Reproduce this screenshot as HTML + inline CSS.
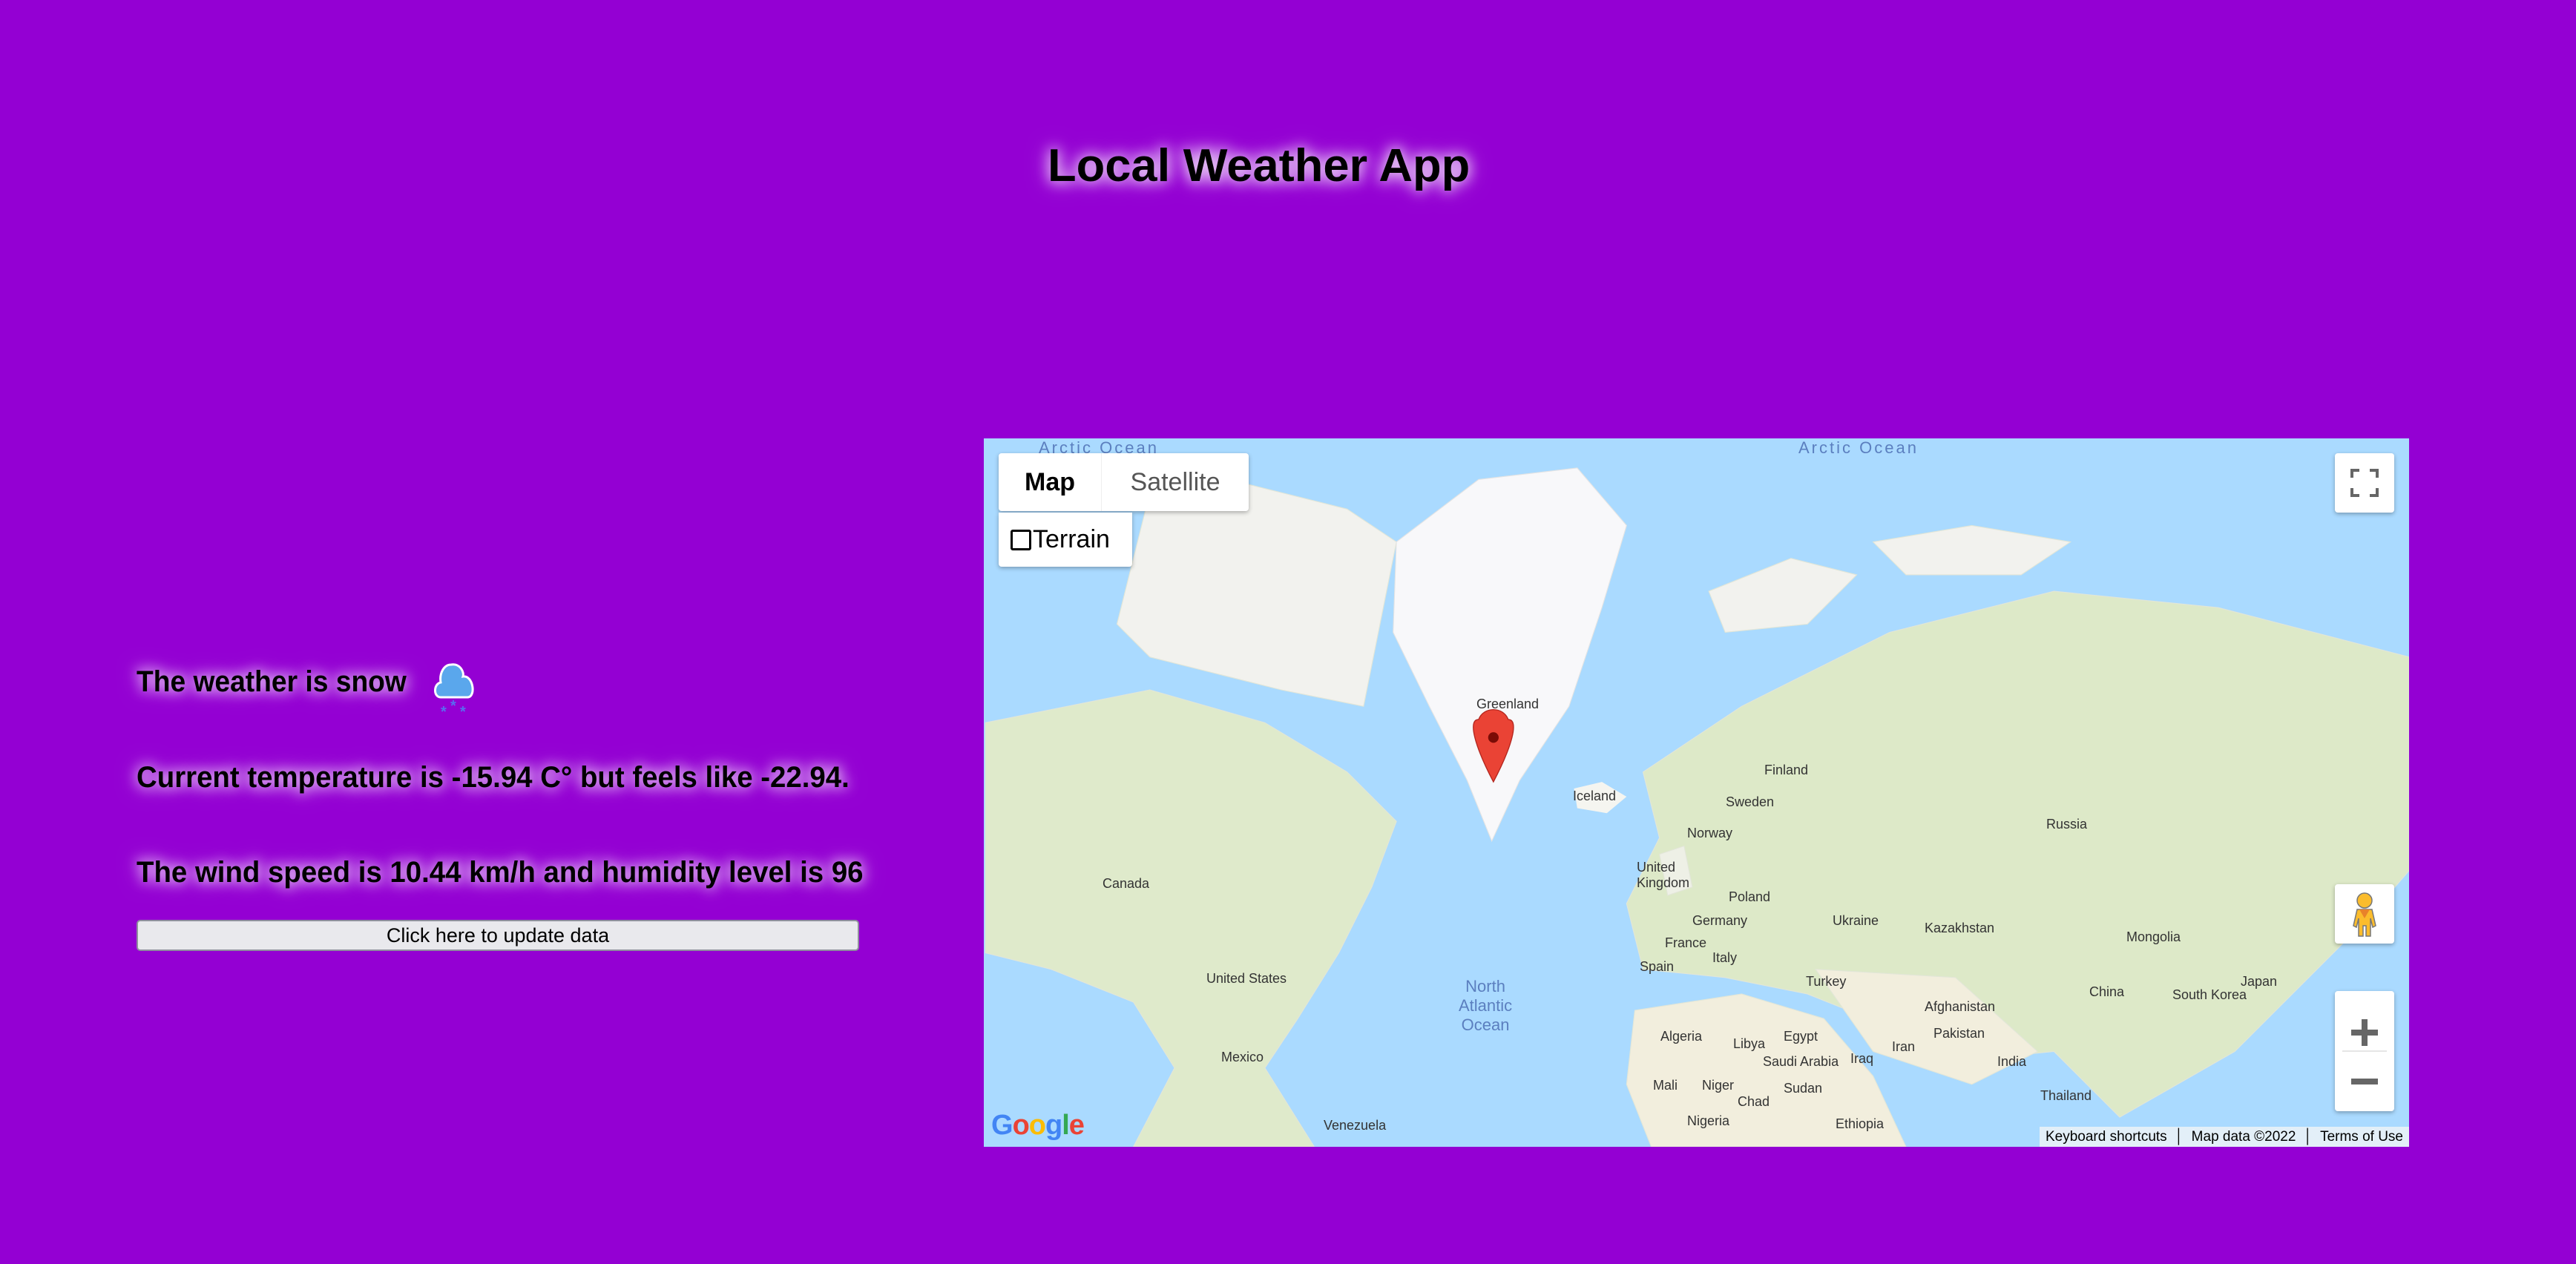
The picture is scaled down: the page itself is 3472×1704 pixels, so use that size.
<!DOCTYPE html>
<html><head><meta charset="utf-8"><style>
html,body{margin:0;padding:0;width:3472px;height:1704px;background:#9400d3;overflow:hidden;font-family:"Liberation Sans",sans-serif}
.glow{text-shadow:0 0 18px #fff,0 0 30px rgba(255,255,255,.6);font-weight:bold;color:#000;position:absolute;white-space:nowrap;transform-origin:left center}
#title{left:1412px;top:188px;font-size:62px;transform:scaleX(1.02)}
.line{left:184px;font-size:40px;transform:scaleX(.96)}
#btn{position:absolute;left:184px;top:1240px;width:974px;height:42px;background:#e9e9ed;border:2px solid #8f8f9d;border-radius:5px;box-sizing:border-box;font-size:27px;text-align:center;line-height:38px}
#map{position:absolute;left:1326px;top:591px;width:1921px;height:955px;background:#aadaff;overflow:hidden}
.ctl{position:absolute;background:#fff;border-radius:4px;box-shadow:0 2px 6px rgba(0,0,0,.3)}
.lbl{position:absolute;font-size:18px;color:#333;white-space:nowrap}
.oc{position:absolute;font-size:22px;color:#5b7fbf;letter-spacing:3px;white-space:nowrap}
</style></head><body>
<div id="title" class="glow">Local Weather App</div>
<div class="glow line" style="top:897px;transform:scaleX(.93)">The weather is snow</div>
<svg style="position:absolute;left:580px;top:888px" width="75" height="80" viewBox="0 0 75 80">
<path d="M14 52 C4 52 4 34 14 32 C12 20 18 8 28 8 C40 6 46 18 44 24 C58 22 62 52 50 52 Z" fill="#5aa7ec" stroke="#fff" stroke-width="3"/>
<text x="14" y="78" font-size="20" fill="#5a6bf0" font-weight="bold">*</text><text x="27" y="70" font-size="20" fill="#5a6bf0" font-weight="bold">*</text><text x="40" y="78" font-size="20" fill="#5a6bf0" font-weight="bold">*</text>
</svg>
<div class="glow line" style="top:1026px">Current temperature is -15.94 C° but feels like -22.94.</div>
<div class="glow line" style="top:1154px">The wind speed is 10.44 km/h and humidity level is 96</div>
<div id="btn">Click here to update data</div>

<div id="map">
<svg width="1921" height="955" viewBox="599 267 867 431" preserveAspectRatio="none" style="position:absolute;left:0;top:0">
<g fill="#eef0e6" stroke="#e2e6d8" stroke-width=".5">
<path d="M700 300 L760 295 L820 310 L850 330 L840 380 L830 430 L780 420 L740 410 L700 400 L680 380 L690 340 Z" fill="#f2f2ee"/>
<path d="M600 440 L700 420 L770 440 L820 470 L850 500 L835 540 L815 580 L790 620 L770 650 L800 698 L690 698 L715 650 L690 610 L640 590 L600 580 Z" fill="#dfeacb"/>
<path d="M1000 470 L1060 430 L1150 385 L1250 360 L1350 370 L1466 400 L1466 530 L1440 560 L1400 600 L1360 640 L1290 680 L1250 640 L1200 645 L1150 625 L1100 605 L1050 595 L1000 590 L990 550 L1010 510 Z" fill="#dde9c8"/>
<path d="M1040 360 L1090 340 L1130 350 L1100 380 L1050 385 Z" fill="#f2f2ee"/>
<path d="M1140 330 L1200 320 L1260 330 L1230 350 L1160 350 Z" fill="#f2f2ee"/>
<path d="M995 615 L1060 605 L1110 620 L1140 655 L1160 698 L1005 698 L990 660 Z" fill="#f2eedd"/>
<path d="M1105 590 L1190 595 L1240 640 L1200 660 L1140 640 Z" fill="#f2eedd"/>
<path d="M1010 520 L1025 515 L1030 540 L1015 545 Z"/>
</g>
<path d="M850 330 L900 292 L960 285 L990 320 L975 370 L955 430 L925 475 L908 512 L893 475 L870 430 L848 385 Z" fill="#f8f8fa" stroke="#e4e4e4" stroke-width=".5"/>
<path d="M958 480 L975 476 L990 485 L978 495 L960 492 Z" fill="#f5f5f0"/>
<path d="M900 438 C893 438 898 455 909 476 C920 455 925 438 918 438 C915 430 903 430 900 438 Z" fill="#ea4335" stroke="#b3261e" stroke-width=".6"/>
<circle cx="909" cy="449" r="3.2" fill="#7a0c06"/>
</svg>
<div class="oc" style="left:74px;top:0px">Arctic Ocean</div>
<div class="oc" style="left:1098px;top:0px">Arctic Ocean</div>
<div class="lbl" style="left:664px;top:348px">Greenland</div>
<div class="lbl" style="left:794px;top:472px">Iceland</div>
<div class="lbl" style="left:1052px;top:437px">Finland</div>
<div class="lbl" style="left:1000px;top:480px">Sweden</div>
<div class="lbl" style="left:948px;top:522px">Norway</div>
<div class="lbl" style="left:1432px;top:510px">Russia</div>
<div class="lbl" style="left:880px;top:568px">United<br>Kingdom</div>
<div class="lbl" style="left:1004px;top:608px">Poland</div>
<div class="lbl" style="left:1144px;top:640px">Ukraine</div>
<div class="lbl" style="left:1268px;top:650px">Kazakhstan</div>
<div class="lbl" style="left:1540px;top:662px">Mongolia</div>
<div class="lbl" style="left:955px;top:640px">Germany</div>
<div class="lbl" style="left:918px;top:670px">France</div>
<div class="lbl" style="left:982px;top:690px">Italy</div>
<div class="lbl" style="left:884px;top:702px">Spain</div>
<div class="lbl" style="left:1108px;top:722px">Turkey</div>
<div class="lbl" style="left:1268px;top:756px">Afghanistan</div>
<div class="lbl" style="left:1490px;top:736px">China</div>
<div class="lbl" style="left:1602px;top:740px">South Korea</div>
<div class="lbl" style="left:1694px;top:722px">Japan</div>
<div class="lbl" style="left:160px;top:590px">Canada</div>
<div class="lbl" style="left:300px;top:718px">United States</div>
<div class="lbl" style="left:320px;top:824px">Mexico</div>
<div class="lbl" style="left:640px;top:726px;font-size:22px;color:#5b7fbf;text-align:center">North<br>Atlantic<br>Ocean</div>
<div class="lbl" style="left:912px;top:796px">Algeria</div>
<div class="lbl" style="left:1010px;top:806px">Libya</div>
<div class="lbl" style="left:1078px;top:796px">Egypt</div>
<div class="lbl" style="left:1168px;top:826px">Iraq</div>
<div class="lbl" style="left:1050px;top:830px">Saudi Arabia</div>
<div class="lbl" style="left:1224px;top:810px">Iran</div>
<div class="lbl" style="left:1280px;top:792px">Pakistan</div>
<div class="lbl" style="left:1366px;top:830px">India</div>
<div class="lbl" style="left:1424px;top:876px">Thailand</div>
<div class="lbl" style="left:902px;top:862px">Mali</div>
<div class="lbl" style="left:968px;top:862px">Niger</div>
<div class="lbl" style="left:1016px;top:884px">Chad</div>
<div class="lbl" style="left:1078px;top:866px">Sudan</div>
<div class="lbl" style="left:1148px;top:914px">Ethiopia</div>
<div class="lbl" style="left:948px;top:910px">Nigeria</div>
<div class="lbl" style="left:458px;top:916px">Venezuela</div>

<div class="ctl" style="left:20px;top:20px;width:337px;height:78px;display:flex;font-size:34px">
<div style="width:138px;text-align:center;line-height:78px;font-weight:bold;border-right:1px solid #eee">Map</div>
<div style="flex:1;text-align:center;line-height:78px;color:#555">Satellite</div></div>
<div class="ctl" style="left:20px;top:100px;width:180px;height:73px;font-size:34px;line-height:73px;border-radius:0 0 4px 4px">
<span style="display:inline-block;width:22px;height:22px;border:3px solid #000;border-radius:3px;margin:0 2px 0 16px;vertical-align:-4px"></span>Terrain</div>
<div class="ctl" style="left:1821px;top:20px;width:80px;height:80px">
<svg width="80" height="80"><g stroke="#666" stroke-width="4" fill="none"><path d="M23 33V23H33M47 23H57V33M57 47V57H47M33 57H23V47"/></g></svg></div>
<div class="ctl" style="left:1821px;top:601px;width:80px;height:80px">
<svg width="80" height="80"><g fill="#fbbc2c" stroke="#777" stroke-width="1.5"><circle cx="40" cy="22" r="10"/><path d="M30 34H50L55 56L51 58L48 46V70H42V56H38V70H32V46L29 58L25 56Z"/></g><path d="M33 34H47L40 46Z" fill="#e8822a"/></svg></div>
<div class="ctl" style="left:1821px;top:745px;width:80px;height:162px">
<div style="position:absolute;left:22px;top:52px;width:36px;height:8px;background:#666"></div>
<div style="position:absolute;left:36px;top:38px;width:8px;height:36px;background:#666"></div>
<div style="position:absolute;left:10px;top:80px;width:60px;height:2px;background:#e6e6e6"></div>
<div style="position:absolute;left:22px;top:118px;width:36px;height:8px;background:#666"></div></div>
<div style="position:absolute;left:10px;top:905px;font-size:38px;font-weight:bold;letter-spacing:-1px"><span style="color:#4285f4">G</span><span style="color:#ea4335">o</span><span style="color:#fbbc05">o</span><span style="color:#4285f4">g</span><span style="color:#34a853">l</span><span style="color:#ea4335">e</span></div>
<div style="position:absolute;right:0;bottom:0;height:27px;background:rgba(245,245,245,.75);font-size:19px;line-height:27px;white-space:nowrap;padding:0 8px">Keyboard shortcuts &nbsp;│&nbsp; Map data ©2022 &nbsp;│&nbsp; Terms of Use</div>
</div>
</body></html>
